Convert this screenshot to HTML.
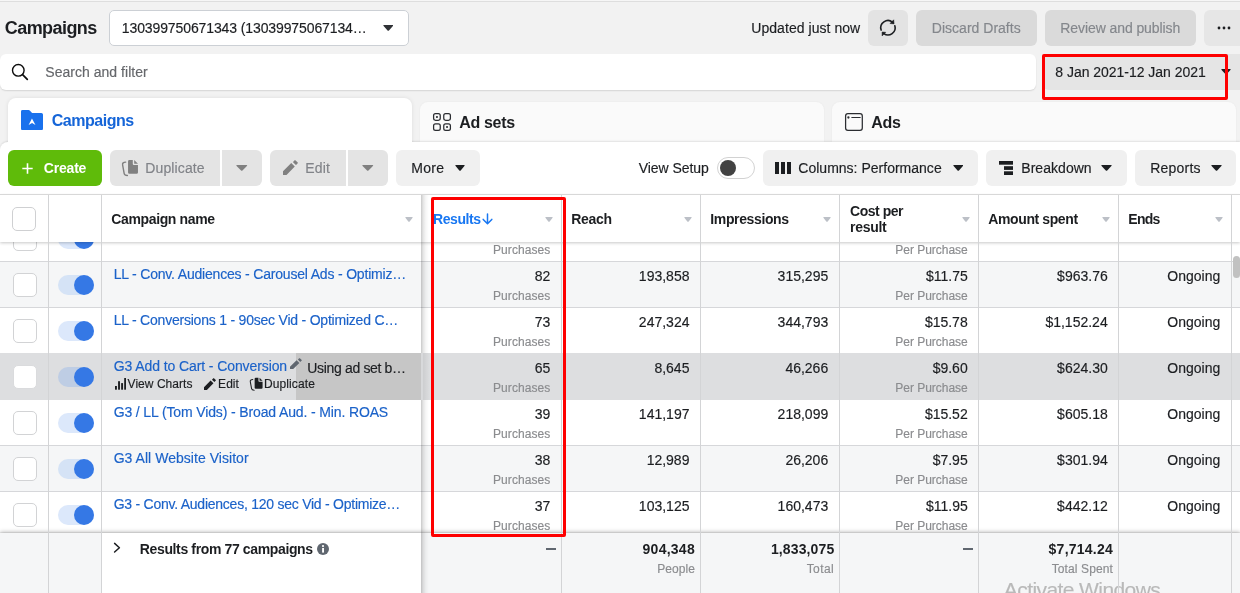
<!DOCTYPE html><html><head><meta charset="utf-8"><title>Campaigns</title><style>html,body{margin:0;padding:0;width:1240px;height:593px;overflow:hidden}body{position:relative;background:#f2f2f2;font-family:"Liberation Sans",sans-serif;will-change:transform;}.t{position:absolute;white-space:nowrap;-webkit-text-stroke:.16px currentColor}.b{position:absolute}</style></head><body><div class="b" style="left:0px;top:0px;width:1240px;height:1px;background:#f6f6f6;"></div>
<div class="b" style="left:0px;top:1px;width:1240px;height:1px;background:#dedede;"></div>
<span class="t" style="top:16px;font-size:18px;line-height:25px;color:#1c1e21;font-weight:700;-webkit-text-stroke:0;letter-spacing:-0.570px;left:4.80px;">Campaigns</span>
<div class="b" style="left:109px;top:10px;width:300px;height:36px;background:#fff;border-radius:5px;box-sizing:border-box;border:1px solid #ccd0d5;"></div>
<span class="t" style="top:18px;font-size:14px;line-height:20px;color:#1c1e21;letter-spacing:-0.108px;left:121.80px;">130399750671343 (13039975067134…</span>
<svg class="b" style="left:382.5px;top:25px" width="10.5" height="6" viewBox="0 0 10.5 6"><path d="M0.9 0 H9.6 Q10.7 0 9.9 0.9 L5.95 5.5 Q5.25 6.2 4.55 5.5 L0.6 0.9 Q-0.2 0 0.9 0Z" fill="#303236"/></svg>
<div class="b" style="left:0px;top:54px;width:1036px;height:36px;background:#fff;border-radius:6px;box-shadow:0 1px 1.5px rgba(0,0,0,.12);"></div>
<svg class="b" style="left:10.2px;top:62.3px" width="20" height="20" viewBox="0 0 20 20"><circle cx="8.3" cy="8.3" r="5.8" fill="none" stroke="#0c0c0c" stroke-width="1.4"/><path d="M12.6 12.6 L17.3 17.3" stroke="#0c0c0c" stroke-width="1.7" stroke-linecap="round"/></svg>
<span class="t" style="top:62px;font-size:14px;line-height:20px;color:#65676b;letter-spacing:0.026px;left:45.30px;">Search and filter</span>
<span class="t" style="top:18px;font-size:14px;line-height:20px;color:#1c1e21;letter-spacing:0.045px;left:751.30px;">Updated just now</span>
<div class="b" style="left:868px;top:10px;width:40px;height:36px;background:#e3e3e3;border-radius:6px;"></div>
<svg class="b" style="left:872px;top:12px" width="32" height="32" viewBox="0 0 32 32"><g fill="none" stroke="#1c1e21" stroke-width="1.6" stroke-linecap="round"><path d="M9.15 18.1 A7.2 7.2 0 0 1 20.6 10.3"/><path d="M22.85 13.7 A7.2 7.2 0 0 1 11.8 21.6"/></g><path d="M21.7 7.8 L22.1 11.9 L18 11.5Z M10.1 20 L10.1 24 L13.8 20.3Z" fill="#1c1e21" stroke="#1c1e21" stroke-width=".5" stroke-linejoin="round"/></svg>
<div class="b" style="left:916px;top:10px;width:121px;height:36px;background:#dadada;border-radius:6px;"></div>
<span class="t" style="top:18px;font-size:14px;line-height:20px;color:#84878c;letter-spacing:0.015px;left:931.80px;">Discard Drafts</span>
<div class="b" style="left:1045px;top:10px;width:151px;height:36px;background:#dadada;border-radius:6px;"></div>
<span class="t" style="top:18px;font-size:14px;line-height:20px;color:#84878c;letter-spacing:-0.084px;left:1060.30px;">Review and publish</span>
<div class="b" style="left:1204px;top:10px;width:36px;height:36px;background:#e6e6e6;border-radius:6px 0 0 6px;"></div>
<svg class="b" style="left:1216px;top:24px" width="16" height="8" viewBox="0 0 16 8" fill="#1c1e21"><circle cx="3" cy="4" r="1.4"/><circle cx="8" cy="4" r="1.4"/><circle cx="13" cy="4" r="1.4"/></svg>
<div class="b" style="left:1043px;top:54px;width:197px;height:36px;background:#e5e5e5;border-radius:6px 0 0 6px;"></div>
<span class="t" style="top:62px;font-size:14px;line-height:20px;color:#1c1e21;letter-spacing:-0.028px;left:1055.30px;">8 Jan 2021-12 Jan 2021</span>
<svg class="b" style="left:1221px;top:69px" width="10" height="5.5" viewBox="0 0 10 5.5"><path d="M0.9 0 H9.1 Q10.2 0 9.4 0.9 L5.7 5.0 Q5.0 5.7 4.3 5.0 L0.6 0.9 Q-0.2 0 0.9 0Z" fill="#1c1e21"/></svg>
<div class="b" style="left:1042px;top:54px;width:186px;height:46px;border-radius:2px;box-sizing:border-box;border:3px solid #fe0000;"></div>
<div class="b" style="left:8px;top:98px;width:404px;height:50px;background:#fff;border-radius:8px 8px 0 0;box-shadow:0 0 4px rgba(0,0,0,.09);"></div>
<div class="b" style="left:420px;top:102px;width:404px;height:40px;background:#fafafa;border-radius:8px 8px 0 0;box-shadow:0 0 2px rgba(0,0,0,.06);"></div>
<div class="b" style="left:832px;top:102px;width:404px;height:40px;background:#fafafa;border-radius:8px 8px 0 0;box-shadow:0 0 2px rgba(0,0,0,.06);"></div>
<svg class="b" style="left:21px;top:109.8px" width="22" height="20.2" viewBox="0 0 22 20.2"><path d="M1.5 0 H7.6 Q8.4 0 9 .7 L10.6 2.5 Q11.1 3.05 11.9 3.05 H20.4 Q22 3.05 22 4.6 V18.6 Q22 20.2 20.4 20.2 H1.6 Q0 20.2 0 18.6 V1.5 Q0 0 1.5 0Z" fill="#1971ed"/><path d="M10.95 8.4 L14.5 15.1 L11.05 12.9 L7.6 15.1Z" fill="#fff"/></svg>
<span class="t" style="top:110px;font-size:16px;line-height:22px;color:#1565d8;font-weight:700;-webkit-text-stroke:0;letter-spacing:-0.483px;left:51.80px;">Campaigns</span>
<svg class="b" style="left:426px;top:106px" width="32" height="32" viewBox="0 0 32 32" fill="none" stroke="#2b2d31" stroke-width="1.25"><rect x="7.6" y="7.6" width="6.65" height="6.65" rx="1.9"/><rect x="17.75" y="7.6" width="6.65" height="6.65" rx="1.9"/><rect x="7.6" y="17.75" width="6.65" height="6.65" rx="1.9"/><rect x="17.75" y="17.75" width="6.65" height="6.65" rx="1.9"/><circle cx="10.95" cy="10.95" r="1.05" fill="#2b2d31" stroke="none"/><circle cx="21.05" cy="21.05" r="1.05" fill="#2b2d31" stroke="none"/></svg>
<span class="t" style="top:112px;font-size:16px;line-height:22px;color:#1c1e21;font-weight:700;-webkit-text-stroke:0;letter-spacing:-0.342px;left:459.30px;">Ad sets</span>
<svg class="b" style="left:838px;top:106px" width="32" height="32" viewBox="0 0 32 32" fill="none" stroke="#2b2d31" stroke-width="1.25"><rect x="7.6" y="7.6" width="16.7" height="16.7" rx="2.3"/><path d="M13.8 11.5 H22.2" stroke-width="1.1" stroke-linecap="round"/><circle cx="10.4" cy="11.5" r="1.15" fill="#2b2d31" stroke="none"/></svg>
<span class="t" style="top:112px;font-size:16px;line-height:22px;color:#1c1e21;font-weight:700;-webkit-text-stroke:0;letter-spacing:-0.278px;left:871.30px;">Ads</span>
<div class="b" style="left:0px;top:142px;width:1240px;height:53px;background:#fff;border-radius:8px 0 0 0;box-shadow:0 -1px 2px rgba(0,0,0,.10);"></div>
<div class="b" style="left:8px;top:136px;width:404px;height:14px;background:#fff;"></div>
<div class="b" style="left:8px;top:150px;width:94px;height:36px;background:#5fbb0a;border-radius:6px;"></div>
<svg class="b" style="left:22px;top:163px" width="11" height="11" viewBox="0 0 11 11"><path d="M5.5 .3 V10.7 M.3 5.5 H10.7" stroke="#fff" stroke-width="1.6"/></svg>
<span class="t" style="top:158px;font-size:14px;line-height:20px;color:#fff;font-weight:700;-webkit-text-stroke:0;letter-spacing:-0.199px;left:43.80px;">Create</span>
<div class="b" style="left:110px;top:150px;width:110px;height:36px;background:#e4e4e4;border-radius:6px 0 0 6px;"></div>
<div class="b" style="left:222px;top:150px;width:40px;height:36px;background:#e4e4e4;border-radius:0 6px 6px 0;"></div>
<span class="t" style="top:158px;font-size:14px;line-height:20px;color:#808388;letter-spacing:0.114px;left:145.30px;">Duplicate</span>
<svg class="b" style="left:236px;top:165px" width="11.5" height="6" viewBox="0 0 11.5 6"><path d="M0.9 0 H10.6 Q11.7 0 10.9 0.9 L6.45 5.5 Q5.75 6.2 5.05 5.5 L0.6 0.9 Q-0.2 0 0.9 0Z" fill="#808080"/></svg>
<div class="b" style="left:270px;top:150px;width:76px;height:36px;background:#e4e4e4;border-radius:6px 0 0 6px;"></div>
<div class="b" style="left:348px;top:150px;width:40px;height:36px;background:#e4e4e4;border-radius:0 6px 6px 0;"></div>
<svg class="b" style="left:116px;top:154px" width="30" height="28" viewBox="0 0 30 28"><path d="M9.7 8.1 Q6.2 8.3 6.6 10.8 L8.2 19.6 Q8.6 21.5 11.4 21.5" fill="none" stroke="#808080" stroke-width="1.4" stroke-linecap="round"/><path d="M13.4 5.9 H16.8 V9.9 Q16.8 10.9 17.8 10.9 H21.97 V18.5 Q21.97 19.85 20.6 19.85 H13.4 Q12.05 19.85 12.05 18.5 V7.25 Q12.05 5.9 13.4 5.9Z M18.2 5.9 L21.97 9.7 H18.2Z" fill="#808080"/></svg>
<svg class="b" style="left:283.1px;top:159.9px" width="15.1" height="14.9" viewBox="0 0 15.1 14.9"><path d="M0 11.3 L8.25 3.1 L11.8 6.5 L3.5 14.9 H0Z M11.6 .35 Q12 0 12.4 .35 L14.75 2.5 Q15.1 2.85 14.75 3.2 L13.3 4.75 Q13 5.1 12.65 4.75 L10.25 2.45 Q9.9 2.1 10.25 1.75Z" fill="#808080"/></svg>
<span class="t" style="top:158px;font-size:14px;line-height:20px;color:#808388;letter-spacing:0.194px;left:305.30px;">Edit</span>
<svg class="b" style="left:362px;top:165px" width="11.5" height="6" viewBox="0 0 11.5 6"><path d="M0.9 0 H10.6 Q11.7 0 10.9 0.9 L6.45 5.5 Q5.75 6.2 5.05 5.5 L0.6 0.9 Q-0.2 0 0.9 0Z" fill="#808080"/></svg>
<div class="b" style="left:396px;top:150px;width:84px;height:36px;background:#f0f0f0;border-radius:6px;"></div>
<span class="t" style="top:158px;font-size:14px;line-height:20px;color:#1c1e21;letter-spacing:0.311px;left:411.30px;">More</span>
<svg class="b" style="left:455px;top:165px" width="10" height="6" viewBox="0 0 10 6"><path d="M0.9 0 H9.1 Q10.2 0 9.4 0.9 L5.7 5.5 Q5.0 6.2 4.3 5.5 L0.6 0.9 Q-0.2 0 0.9 0Z" fill="#1c1e21"/></svg>
<span class="t" style="top:158px;font-size:14px;line-height:20px;color:#1c1e21;letter-spacing:-0.068px;left:638.80px;">View Setup</span>
<div class="b" style="left:717px;top:157px;width:38px;height:22px;background:#fff;border-radius:11px;box-sizing:border-box;border:1px solid #d2d2d2;"></div>
<div class="b" style="left:720px;top:160px;width:16px;height:16px;background:#424242;border-radius:8px;"></div>
<div class="b" style="left:763px;top:150px;width:215px;height:36px;background:#f0f0f0;border-radius:6px;"></div>
<svg class="b" style="left:775px;top:162px" width="16" height="12" viewBox="0 0 16 12" fill="#1c1e21"><rect x="0" y="0" width="4" height="12"/><rect x="6" y="0" width="4" height="12"/><rect x="12" y="0" width="4" height="12"/></svg>
<span class="t" style="top:158px;font-size:14px;line-height:20px;color:#1c1e21;letter-spacing:0.011px;left:798.30px;">Columns: Performance</span>
<svg class="b" style="left:952.5px;top:165px" width="10.5" height="6" viewBox="0 0 10.5 6"><path d="M0.9 0 H9.6 Q10.7 0 9.9 0.9 L5.95 5.5 Q5.25 6.2 4.55 5.5 L0.6 0.9 Q-0.2 0 0.9 0Z" fill="#1c1e21"/></svg>
<div class="b" style="left:986px;top:150px;width:141px;height:36px;background:#f0f0f0;border-radius:6px;"></div>
<svg class="b" style="left:999px;top:161px" width="14" height="14" viewBox="0 0 14 14" fill="#1c1e21"><rect x="0" y="0" width="14" height="3.7"/><rect x="5" y="5.2" width="9" height="3.7"/><rect x="5" y="10.3" width="9" height="3.7"/></svg>
<span class="t" style="top:158px;font-size:14px;line-height:20px;color:#1c1e21;letter-spacing:0.039px;left:1021.30px;">Breakdown</span>
<svg class="b" style="left:1101px;top:165px" width="11" height="6" viewBox="0 0 11 6"><path d="M0.9 0 H10.1 Q11.2 0 10.4 0.9 L6.2 5.5 Q5.5 6.2 4.8 5.5 L0.6 0.9 Q-0.2 0 0.9 0Z" fill="#1c1e21"/></svg>
<div class="b" style="left:1135px;top:150px;width:101px;height:36px;background:#f0f0f0;border-radius:6px;"></div>
<span class="t" style="top:158px;font-size:14px;line-height:20px;color:#1c1e21;letter-spacing:0.196px;left:1150.30px;">Reports</span>
<svg class="b" style="left:1210.5px;top:165px" width="11" height="6" viewBox="0 0 11 6"><path d="M0.9 0 H10.1 Q11.2 0 10.4 0.9 L6.2 5.5 Q5.5 6.2 4.8 5.5 L0.6 0.9 Q-0.2 0 0.9 0Z" fill="#1c1e21"/></svg>
<div class="b" style="left:0;top:242px;width:1240px;height:290px;overflow:hidden">
<div class="b" style="left:0;top:-242px;width:1240px;height:593px">
<div class="b" style="left:0px;top:216px;width:1240px;height:45px;background:#fff;"></div>
<div class="b" style="left:0px;top:215px;width:1240px;height:1px;background:#d6d7da;"></div>
<div class="b" style="left:0px;top:262px;width:1240px;height:45px;background:#f5f6f7;"></div>
<div class="b" style="left:0px;top:261px;width:1240px;height:1px;background:#d6d7da;"></div>
<div class="b" style="left:0px;top:308px;width:1240px;height:45px;background:#fff;"></div>
<div class="b" style="left:0px;top:307px;width:1240px;height:1px;background:#d6d7da;"></div>
<div class="b" style="left:0px;top:354px;width:1240px;height:45px;background:#dddee0;"></div>
<div class="b" style="left:0px;top:353px;width:1240px;height:1px;background:#d6d7da;"></div>
<div class="b" style="left:0px;top:400px;width:1240px;height:45px;background:#fff;"></div>
<div class="b" style="left:0px;top:399px;width:1240px;height:1px;background:#d6d7da;"></div>
<div class="b" style="left:0px;top:446px;width:1240px;height:45px;background:#f5f6f7;"></div>
<div class="b" style="left:0px;top:445px;width:1240px;height:1px;background:#d6d7da;"></div>
<div class="b" style="left:0px;top:492px;width:1240px;height:45px;background:#fff;"></div>
<div class="b" style="left:0px;top:491px;width:1240px;height:1px;background:#d6d7da;"></div>
<div class="b" style="left:0px;top:353px;width:1240px;height:47px;background:#dddee0;"></div>
<div class="b" style="left:13px;top:227px;width:24px;height:24px;background:#fff;border-radius:5px;box-sizing:border-box;border:1px solid #d2d3d5;"></div>
<div class="b" style="left:58px;top:229px;width:36px;height:20px;background:#dce8fb;border-radius:10px;"></div>
<div class="b" style="left:74px;top:229px;width:20px;height:20px;background:#3578e5;border-radius:10px;"></div>
<span class="t" style="top:242px;font-size:12px;line-height:17px;color:#8b8c8f;letter-spacing:0.077px;right:689.63px;">Purchases</span>
<span class="t" style="top:242px;font-size:12px;line-height:17px;color:#8b8c8f;letter-spacing:-0.025px;right:272.27px;">Per Purchase</span>
<div class="b" style="left:13px;top:273px;width:24px;height:24px;background:#fff;border-radius:5px;box-sizing:border-box;border:1px solid #d2d3d5;"></div>
<div class="b" style="left:58px;top:275px;width:36px;height:20px;background:#d5e3f6;border-radius:10px;"></div>
<div class="b" style="left:74px;top:275px;width:20px;height:20px;background:#3578e5;border-radius:10px;"></div>
<span class="t" style="top:264px;font-size:14px;line-height:20px;color:#1b62c9;letter-spacing:-0.190px;left:113.70px;">LL - Conv. Audiences - Carousel Ads - Optimiz…</span>
<span class="t" style="top:266px;font-size:14px;line-height:20px;color:#1c1e21;right:689.70px;">82</span>
<span class="t" style="top:266px;font-size:14px;line-height:20px;color:#1c1e21;right:550.55px;">193,858</span>
<span class="t" style="top:266px;font-size:14px;line-height:20px;color:#1c1e21;right:411.80px;">315,295</span>
<span class="t" style="top:266px;font-size:14px;line-height:20px;color:#1c1e21;right:272.30px;">$11.75</span>
<span class="t" style="top:266px;font-size:14px;line-height:20px;color:#1c1e21;right:132.30px;">$963.76</span>
<span class="t" style="top:266px;font-size:14px;line-height:20px;color:#1c1e21;letter-spacing:-0.005px;right:19.79px;">Ongoing</span>
<span class="t" style="top:288px;font-size:12px;line-height:17px;color:#8b8c8f;letter-spacing:0.077px;right:689.63px;">Purchases</span>
<span class="t" style="top:288px;font-size:12px;line-height:17px;color:#8b8c8f;letter-spacing:-0.025px;right:272.27px;">Per Purchase</span>
<div class="b" style="left:13px;top:319px;width:24px;height:24px;background:#fff;border-radius:5px;box-sizing:border-box;border:1px solid #d2d3d5;"></div>
<div class="b" style="left:58px;top:321px;width:36px;height:20px;background:#dce8fb;border-radius:10px;"></div>
<div class="b" style="left:74px;top:321px;width:20px;height:20px;background:#3578e5;border-radius:10px;"></div>
<span class="t" style="top:310px;font-size:14px;line-height:20px;color:#1b62c9;letter-spacing:-0.216px;left:113.70px;">LL - Conversions 1 - 90sec Vid - Optimized C…</span>
<span class="t" style="top:312px;font-size:14px;line-height:20px;color:#1c1e21;right:689.70px;">73</span>
<span class="t" style="top:312px;font-size:14px;line-height:20px;color:#1c1e21;right:550.55px;">247,324</span>
<span class="t" style="top:312px;font-size:14px;line-height:20px;color:#1c1e21;right:411.80px;">344,793</span>
<span class="t" style="top:312px;font-size:14px;line-height:20px;color:#1c1e21;right:272.30px;">$15.78</span>
<span class="t" style="top:312px;font-size:14px;line-height:20px;color:#1c1e21;right:132.30px;">$1,152.24</span>
<span class="t" style="top:312px;font-size:14px;line-height:20px;color:#1c1e21;letter-spacing:-0.005px;right:19.79px;">Ongoing</span>
<span class="t" style="top:334px;font-size:12px;line-height:17px;color:#8b8c8f;letter-spacing:0.077px;right:689.63px;">Purchases</span>
<span class="t" style="top:334px;font-size:12px;line-height:17px;color:#8b8c8f;letter-spacing:-0.025px;right:272.27px;">Per Purchase</span>
<div class="b" style="left:13px;top:365px;width:24px;height:24px;background:#fff;border-radius:5px;box-sizing:border-box;border:1px solid #dadbdd;"></div>
<div class="b" style="left:58px;top:367px;width:36px;height:20px;background:#becde4;border-radius:10px;"></div>
<div class="b" style="left:74px;top:367px;width:20px;height:20px;background:#3578e5;border-radius:10px;"></div>
<div class="b" style="left:296px;top:353px;width:125px;height:47px;background:#c6c6c6;"></div>
<span class="t" style="top:356px;font-size:14px;line-height:20px;color:#1b62c9;letter-spacing:-0.092px;left:113.70px;">G3 Add to Cart - Conversion</span>
<span class="t" style="top:358px;font-size:14px;line-height:20px;color:#1c1e21;right:689.70px;">65</span>
<span class="t" style="top:358px;font-size:14px;line-height:20px;color:#1c1e21;right:550.55px;">8,645</span>
<span class="t" style="top:358px;font-size:14px;line-height:20px;color:#1c1e21;right:411.80px;">46,266</span>
<span class="t" style="top:358px;font-size:14px;line-height:20px;color:#1c1e21;right:272.30px;">$9.60</span>
<span class="t" style="top:358px;font-size:14px;line-height:20px;color:#1c1e21;right:132.30px;">$624.30</span>
<span class="t" style="top:358px;font-size:14px;line-height:20px;color:#1c1e21;letter-spacing:-0.005px;right:19.79px;">Ongoing</span>
<span class="t" style="top:380px;font-size:12px;line-height:17px;color:#8b8c8f;letter-spacing:0.077px;right:689.63px;">Purchases</span>
<span class="t" style="top:380px;font-size:12px;line-height:17px;color:#8b8c8f;letter-spacing:-0.025px;right:272.27px;">Per Purchase</span>
<svg class="b" style="left:290px;top:357.8px" width="12" height="11.4" viewBox="0 0 15.1 14.9" preserveAspectRatio="none"><path d="M0 11.3 L8.25 3.1 L11.8 6.5 L3.5 14.9 H0Z M11.6 .35 Q12 0 12.4 .35 L14.75 2.5 Q15.1 2.85 14.75 3.2 L13.3 4.75 Q13 5.1 12.65 4.75 L10.25 2.45 Q9.9 2.1 10.25 1.75Z" fill="#606770"/></svg>
<span class="t" style="top:358px;font-size:14px;line-height:20px;color:#1c1e21;letter-spacing:-0.340px;left:307.30px;">Using ad set b…</span>
<svg class="b" style="left:115px;top:378px" width="11" height="11.7" viewBox="0 0 11 11.7" fill="#1c1e21"><rect x="0" y="8" width="1.9" height="3.7"/><rect x="3.07" y="3.2" width="1.9" height="8.5"/><rect x="6.14" y="5.1" width="1.9" height="6.6"/><rect x="9.2" y="0" width="1.8" height="11.7"/></svg>
<span class="t" style="top:376px;font-size:12px;line-height:17px;color:#1c1e21;letter-spacing:0.038px;left:127.60px;">View Charts</span>
<svg class="b" style="left:204.3px;top:377.8px" width="12.1" height="12.1" viewBox="0 0 15.1 14.9" preserveAspectRatio="none"><path d="M0 11.3 L8.25 3.1 L11.8 6.5 L3.5 14.9 H0Z M11.6 .35 Q12 0 12.4 .35 L14.75 2.5 Q15.1 2.85 14.75 3.2 L13.3 4.75 Q13 5.1 12.65 4.75 L10.25 2.45 Q9.9 2.1 10.25 1.75Z" fill="#1c1e21"/></svg>
<span class="t" style="top:376px;font-size:12px;line-height:17px;color:#1c1e21;letter-spacing:0.028px;left:218.10px;">Edit</span>
<svg class="b" style="left:245px;top:373px" width="24" height="22.4" viewBox="0 0 30 28"><path d="M9.7 8.1 Q6.2 8.3 6.6 10.8 L8.2 19.6 Q8.6 21.5 11.4 21.5" fill="none" stroke="#1c1e21" stroke-width="1.3" stroke-linecap="round"/><path d="M13.4 5.9 H16.8 V9.9 Q16.8 10.9 17.8 10.9 H21.97 V18.5 Q21.97 19.85 20.6 19.85 H13.4 Q12.05 19.85 12.05 18.5 V7.25 Q12.05 5.9 13.4 5.9Z M18.2 5.9 L21.97 9.7 H18.2Z" fill="#1c1e21"/></svg>
<span class="t" style="top:376px;font-size:12px;line-height:17px;color:#1c1e21;letter-spacing:0.085px;left:264.10px;">Duplicate</span>
<div class="b" style="left:13px;top:411px;width:24px;height:24px;background:#fff;border-radius:5px;box-sizing:border-box;border:1px solid #d2d3d5;"></div>
<div class="b" style="left:58px;top:413px;width:36px;height:20px;background:#dce8fb;border-radius:10px;"></div>
<div class="b" style="left:74px;top:413px;width:20px;height:20px;background:#3578e5;border-radius:10px;"></div>
<span class="t" style="top:402px;font-size:14px;line-height:20px;color:#1b62c9;letter-spacing:-0.133px;left:113.70px;">G3 / LL (Tom Vids) - Broad Aud. - Min. ROAS</span>
<span class="t" style="top:404px;font-size:14px;line-height:20px;color:#1c1e21;right:689.70px;">39</span>
<span class="t" style="top:404px;font-size:14px;line-height:20px;color:#1c1e21;right:550.55px;">141,197</span>
<span class="t" style="top:404px;font-size:14px;line-height:20px;color:#1c1e21;right:411.80px;">218,099</span>
<span class="t" style="top:404px;font-size:14px;line-height:20px;color:#1c1e21;right:272.30px;">$15.52</span>
<span class="t" style="top:404px;font-size:14px;line-height:20px;color:#1c1e21;right:132.30px;">$605.18</span>
<span class="t" style="top:404px;font-size:14px;line-height:20px;color:#1c1e21;letter-spacing:-0.005px;right:19.79px;">Ongoing</span>
<span class="t" style="top:426px;font-size:12px;line-height:17px;color:#8b8c8f;letter-spacing:0.077px;right:689.63px;">Purchases</span>
<span class="t" style="top:426px;font-size:12px;line-height:17px;color:#8b8c8f;letter-spacing:-0.025px;right:272.27px;">Per Purchase</span>
<div class="b" style="left:13px;top:457px;width:24px;height:24px;background:#fff;border-radius:5px;box-sizing:border-box;border:1px solid #d2d3d5;"></div>
<div class="b" style="left:58px;top:459px;width:36px;height:20px;background:#d5e3f6;border-radius:10px;"></div>
<div class="b" style="left:74px;top:459px;width:20px;height:20px;background:#3578e5;border-radius:10px;"></div>
<span class="t" style="top:448px;font-size:14px;line-height:20px;color:#1b62c9;letter-spacing:0.037px;left:113.70px;">G3 All Website Visitor</span>
<span class="t" style="top:450px;font-size:14px;line-height:20px;color:#1c1e21;right:689.70px;">38</span>
<span class="t" style="top:450px;font-size:14px;line-height:20px;color:#1c1e21;right:550.55px;">12,989</span>
<span class="t" style="top:450px;font-size:14px;line-height:20px;color:#1c1e21;right:411.80px;">26,206</span>
<span class="t" style="top:450px;font-size:14px;line-height:20px;color:#1c1e21;right:272.30px;">$7.95</span>
<span class="t" style="top:450px;font-size:14px;line-height:20px;color:#1c1e21;right:132.30px;">$301.94</span>
<span class="t" style="top:450px;font-size:14px;line-height:20px;color:#1c1e21;letter-spacing:-0.005px;right:19.79px;">Ongoing</span>
<span class="t" style="top:472px;font-size:12px;line-height:17px;color:#8b8c8f;letter-spacing:0.077px;right:689.63px;">Purchases</span>
<span class="t" style="top:472px;font-size:12px;line-height:17px;color:#8b8c8f;letter-spacing:-0.025px;right:272.27px;">Per Purchase</span>
<div class="b" style="left:13px;top:503px;width:24px;height:24px;background:#fff;border-radius:5px;box-sizing:border-box;border:1px solid #d2d3d5;"></div>
<div class="b" style="left:58px;top:505px;width:36px;height:20px;background:#dce8fb;border-radius:10px;"></div>
<div class="b" style="left:74px;top:505px;width:20px;height:20px;background:#3578e5;border-radius:10px;"></div>
<span class="t" style="top:494px;font-size:14px;line-height:20px;color:#1b62c9;letter-spacing:-0.247px;left:113.70px;">G3 - Conv. Audiences, 120 sec Vid - Optimize…</span>
<span class="t" style="top:496px;font-size:14px;line-height:20px;color:#1c1e21;right:689.70px;">37</span>
<span class="t" style="top:496px;font-size:14px;line-height:20px;color:#1c1e21;right:550.55px;">103,125</span>
<span class="t" style="top:496px;font-size:14px;line-height:20px;color:#1c1e21;right:411.80px;">160,473</span>
<span class="t" style="top:496px;font-size:14px;line-height:20px;color:#1c1e21;right:272.30px;">$11.95</span>
<span class="t" style="top:496px;font-size:14px;line-height:20px;color:#1c1e21;right:132.30px;">$442.12</span>
<span class="t" style="top:496px;font-size:14px;line-height:20px;color:#1c1e21;letter-spacing:-0.005px;right:19.79px;">Ongoing</span>
<span class="t" style="top:518px;font-size:12px;line-height:17px;color:#8b8c8f;letter-spacing:0.077px;right:689.63px;">Purchases</span>
<span class="t" style="top:518px;font-size:12px;line-height:17px;color:#8b8c8f;letter-spacing:-0.025px;right:272.27px;">Per Purchase</span>
</div></div>
<div class="b" style="left:0px;top:533px;width:1240px;height:60px;background:#f5f6f7;box-shadow:0 -1px 4px rgba(0,0,0,.28);"></div>
<div class="b" style="left:102px;top:533px;width:319px;height:60px;background:#fff;"></div>
<svg class="b" style="left:113px;top:542.3px" width="9" height="12" viewBox="0 0 9 12"><path d="M1.6 1.4 L6.4 5.7 L1.6 10" fill="none" stroke="#1c1e21" stroke-width="1.5" stroke-linecap="round" stroke-linejoin="round"/></svg>
<span class="t" style="top:539px;font-size:14px;line-height:20px;color:#1c1e21;font-weight:700;-webkit-text-stroke:0;letter-spacing:-0.366px;left:139.80px;">Results from 77 campaigns</span>
<svg class="b" style="left:317px;top:543px" width="12" height="12" viewBox="0 0 12 12"><circle cx="6" cy="6" r="6" fill="#606770"/><rect x="5.1" y="5" width="1.9" height="4.6" fill="#fff"/><circle cx="6" cy="3.1" r="1.1" fill="#fff"/></svg>
<div class="b" style="left:546px;top:548px;width:9.5px;height:1.6px;background:#606770;"></div>
<span class="t" style="top:539px;font-size:14px;line-height:20px;color:#1c1e21;font-weight:700;-webkit-text-stroke:0;letter-spacing:0.256px;right:545.06px;">904,348</span>
<span class="t" style="top:561px;font-size:12px;line-height:17px;color:#8b8c8f;letter-spacing:0.087px;right:544.89px;">People</span>
<span class="t" style="top:539px;font-size:14px;line-height:20px;color:#1c1e21;font-weight:700;-webkit-text-stroke:0;letter-spacing:0.123px;right:405.67px;">1,833,075</span>
<span class="t" style="top:561px;font-size:12px;line-height:17px;color:#8b8c8f;letter-spacing:0.408px;right:405.96px;">Total</span>
<div class="b" style="left:963px;top:548px;width:9.5px;height:1.6px;background:#606770;"></div>
<span class="t" style="top:539px;font-size:14px;line-height:20px;color:#1c1e21;font-weight:700;-webkit-text-stroke:0;letter-spacing:0.234px;right:127.03px;">$7,714.24</span>
<span class="t" style="top:561px;font-size:12px;line-height:17px;color:#8b8c8f;letter-spacing:0.123px;right:126.92px;">Total Spent</span>
<div class="b" style="left:0;top:0;width:1240px;height:593px;overflow:hidden">
<span class="t" style="top:575px;font-size:21px;line-height:29px;color:#b9b9b9;letter-spacing:-0.583px;left:1003.80px;">Activate Windows</span>
</div>
<div class="b" style="left:0px;top:195px;width:1240px;height:47px;background:#fff;box-shadow:0 1px 3px rgba(0,0,0,.22);"></div>
<div class="b" style="left:0px;top:194px;width:1240px;height:1px;background:#d8d8d8;"></div>
<div class="b" style="left:12px;top:207px;width:24px;height:24px;background:#fff;border-radius:5px;box-sizing:border-box;border:1px solid #cfd0d2;"></div>
<span class="t" style="top:209px;font-size:14px;line-height:20px;color:#1c1e21;font-weight:700;-webkit-text-stroke:0;letter-spacing:-0.365px;left:111.30px;">Campaign name</span>
<span class="t" style="top:209px;font-size:14px;line-height:20px;color:#1877f2;font-weight:700;-webkit-text-stroke:0;letter-spacing:-0.418px;left:433.05px;">Results</span>
<svg class="b" style="left:482.3px;top:212.8px" width="11" height="12" viewBox="0 0 11 12" fill="none" stroke="#1877f2" stroke-width="1.5" stroke-linecap="round" stroke-linejoin="round"><path d="M5.5 1 V10.6 M1.2 6.4 L5.5 10.8 L9.8 6.4"/></svg>
<span class="t" style="top:209px;font-size:14px;line-height:20px;color:#1c1e21;font-weight:700;-webkit-text-stroke:0;letter-spacing:-0.326px;left:571.30px;">Reach</span>
<span class="t" style="top:209px;font-size:14px;line-height:20px;color:#1c1e21;font-weight:700;-webkit-text-stroke:0;letter-spacing:-0.371px;left:710.30px;">Impressions</span>
<span class="t" style="top:201px;font-size:14px;line-height:20px;color:#1c1e21;font-weight:700;-webkit-text-stroke:0;letter-spacing:-0.462px;left:850.00px;">Cost per</span>
<span class="t" style="top:217px;font-size:14px;line-height:20px;color:#1c1e21;font-weight:700;-webkit-text-stroke:0;letter-spacing:-0.288px;left:850.00px;">result</span>
<span class="t" style="top:209px;font-size:14px;line-height:20px;color:#1c1e21;font-weight:700;-webkit-text-stroke:0;letter-spacing:-0.392px;left:988.30px;">Amount spent</span>
<span class="t" style="top:209px;font-size:14px;line-height:20px;color:#1c1e21;font-weight:700;-webkit-text-stroke:0;letter-spacing:-0.709px;left:1128.30px;">Ends</span>
<svg class="b" style="left:405px;top:217px" width="8" height="5" viewBox="0 0 8 5"><path d="M0.9 0 H7.1 Q8.2 0 7.4 0.9 L4.7 4.5 Q4.0 5.2 3.3 4.5 L0.6 0.9 Q-0.2 0 0.9 0Z" fill="#bcc0c7"/></svg>
<svg class="b" style="left:545px;top:217px" width="8" height="5" viewBox="0 0 8 5"><path d="M0.9 0 H7.1 Q8.2 0 7.4 0.9 L4.7 4.5 Q4.0 5.2 3.3 4.5 L0.6 0.9 Q-0.2 0 0.9 0Z" fill="#bcc0c7"/></svg>
<svg class="b" style="left:684px;top:217px" width="8" height="5" viewBox="0 0 8 5"><path d="M0.9 0 H7.1 Q8.2 0 7.4 0.9 L4.7 4.5 Q4.0 5.2 3.3 4.5 L0.6 0.9 Q-0.2 0 0.9 0Z" fill="#bcc0c7"/></svg>
<svg class="b" style="left:822.7px;top:217px" width="8" height="5" viewBox="0 0 8 5"><path d="M0.9 0 H7.1 Q8.2 0 7.4 0.9 L4.7 4.5 Q4.0 5.2 3.3 4.5 L0.6 0.9 Q-0.2 0 0.9 0Z" fill="#bcc0c7"/></svg>
<svg class="b" style="left:962px;top:217px" width="8" height="5" viewBox="0 0 8 5"><path d="M0.9 0 H7.1 Q8.2 0 7.4 0.9 L4.7 4.5 Q4.0 5.2 3.3 4.5 L0.6 0.9 Q-0.2 0 0.9 0Z" fill="#bcc0c7"/></svg>
<svg class="b" style="left:1102px;top:217px" width="8" height="5" viewBox="0 0 8 5"><path d="M0.9 0 H7.1 Q8.2 0 7.4 0.9 L4.7 4.5 Q4.0 5.2 3.3 4.5 L0.6 0.9 Q-0.2 0 0.9 0Z" fill="#bcc0c7"/></svg>
<svg class="b" style="left:1215px;top:217px" width="8" height="5" viewBox="0 0 8 5"><path d="M0.9 0 H7.1 Q8.2 0 7.4 0.9 L4.7 4.5 Q4.0 5.2 3.3 4.5 L0.6 0.9 Q-0.2 0 0.9 0Z" fill="#bcc0c7"/></svg>
<div class="b" style="left:48px;top:195px;width:1px;height:398px;background:#d3d4d6;"></div>
<div class="b" style="left:101px;top:195px;width:1px;height:398px;background:#d3d4d6;"></div>
<div class="b" style="left:561px;top:195px;width:1px;height:398px;background:#d3d4d6;"></div>
<div class="b" style="left:700px;top:195px;width:1px;height:398px;background:#d3d4d6;"></div>
<div class="b" style="left:839px;top:195px;width:1px;height:398px;background:#d3d4d6;"></div>
<div class="b" style="left:978px;top:195px;width:1px;height:398px;background:#d3d4d6;"></div>
<div class="b" style="left:1118px;top:195px;width:1px;height:398px;background:#d3d4d6;"></div>
<div class="b" style="left:1231px;top:195px;width:1px;height:398px;background:#d3d4d6;"></div>
<div class="b" style="left:421px;top:195px;width:8px;height:398px;background:linear-gradient(to right,rgba(0,0,0,.21),rgba(0,0,0,.1) 28%,rgba(0,0,0,.035) 60%,rgba(0,0,0,0));"></div>
<div class="b" style="left:421px;top:353px;width:8px;height:47px;background:#dddee0;"></div>
<div class="b" style="left:421px;top:353px;width:2px;height:47px;background:#d8d9db;"></div>
<div class="b" style="left:422.6px;top:353px;width:7px;height:47px;background:linear-gradient(to right,rgba(0,0,0,.075),rgba(0,0,0,0));"></div>
<div class="b" style="left:1233px;top:256px;width:7px;height:22px;background:#c1c1c1;border-radius:4px;"></div>
<div class="b" style="left:431px;top:197px;width:135px;height:340px;border-radius:2px;box-sizing:border-box;border:3px solid #fe0000;"></div></body></html>
